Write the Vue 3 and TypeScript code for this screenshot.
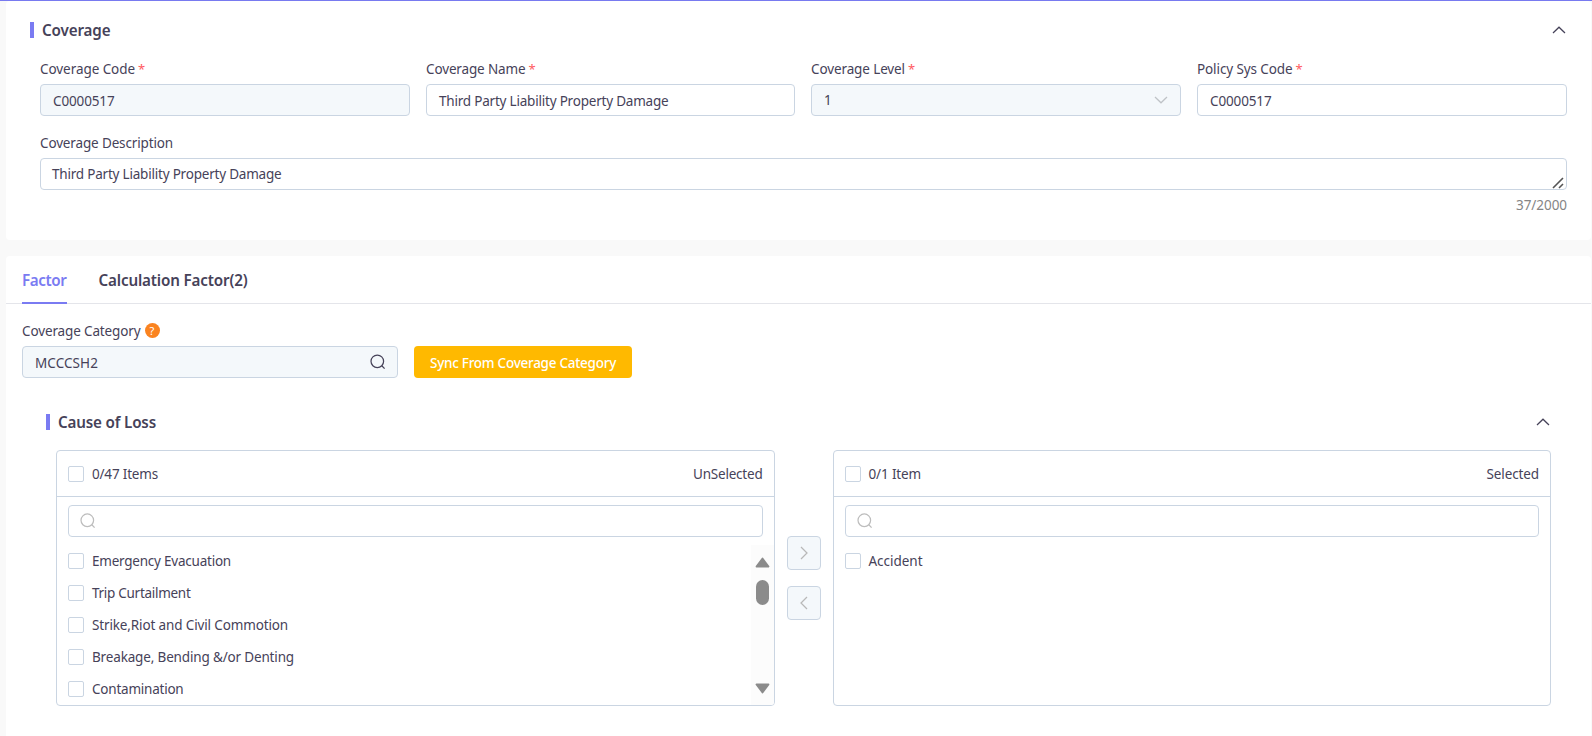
<script setup lang="ts">
interface Field {
  label: string
  labelWidth: number
  value: string
  valueWidth: number
  kind: 'text' | 'select'
  disabled: boolean
}

interface Item {
  name: string
  width: number
}

interface Panel {
  count: string
  countWidth: number
  title: string
  titleWidth: number
  items: Item[]
  scroll: boolean
}

const fields: Field[] = [
  { label: 'Coverage Code', labelWidth: 95, value: 'C0000517', valueWidth: 61.5, kind: 'text', disabled: true },
  { label: 'Coverage Name', labelWidth: 99.5, value: 'Third Party Liability Property Damage', valueWidth: 229.5, kind: 'text', disabled: false },
  { label: 'Coverage Level', labelWidth: 94, value: '1', valueWidth: 8, kind: 'select', disabled: true },
  { label: 'Policy Sys Code', labelWidth: 95.5, value: 'C0000517', valueWidth: 61.5, kind: 'text', disabled: false },
]

const source: Panel = {
  count: '0/47 Items',
  countWidth: 66,
  title: 'UnSelected',
  titleWidth: 69.5,
  items: [
    { name: 'Emergency Evacuation', width: 139 },
    { name: 'Trip Curtailment', width: 98.5 },
    { name: 'Strike,Riot and Civil Commotion', width: 196 },
    { name: 'Breakage, Bending &/or Denting', width: 202 },
    { name: 'Contamination', width: 91.5 },
  ],
  scroll: true,
}

const target: Panel = {
  count: '0/1 Item',
  countWidth: 52.5,
  title: 'Selected',
  titleWidth: 52.5,
  items: [{ name: 'Accident', width: 54 }],
  scroll: false,
}

const panels: Panel[] = [source, target]

// Tracks a label's letters so that it takes the given width in px.
const vFit = {
  mounted(el: HTMLElement, binding: { value: number }) {
    const natural = el.getBoundingClientRect().width
    const count = (el.textContent ?? '').length
    if (count > 1) el.style.letterSpacing = `${(binding.value - natural) / count}px`
  },
}
</script>

<template>
  <div class="page">
    <section class="card coverage">
      <header class="section-head">
        <i class="bar"></i>
        <h2 v-fit="68.5">Coverage</h2>
        <svg class="chev" viewBox="0 0 14 8"><path d="M1 7 7 1.2 13 7" /></svg>
      </header>

      <div class="fields">
        <div v-for="f in fields" :key="f.label" class="field">
          <div class="label"><span v-fit="f.labelWidth">{{ f.label }}</span><b class="req">*</b></div>
          <div class="input" :class="{ disabled: f.disabled, select: f.kind === 'select' }">
            <span v-fit="f.valueWidth" class="val">{{ f.value }}</span>
            <svg v-if="f.kind === 'select'" class="down" viewBox="0 0 14 8"><path d="M1 1 7 6.8 13 1" /></svg>
          </div>
        </div>
      </div>

      <div class="field desc">
        <div class="label"><span v-fit="133">Coverage Description</span></div>
        <div class="input area">
          <span v-fit="229.5" class="val">Third Party Liability Property Damage</span>
          <svg class="grip" viewBox="0 0 12 12"><path d="M1 11 11 1M7 11 11 7" /></svg>
        </div>
        <div class="counter"><span v-fit="51">37/2000</span></div>
      </div>
    </section>

    <section class="card factor">
      <nav class="tabs">
        <a class="tab active"><span v-fit="44.5">Factor</span></a>
        <a class="tab"><span v-fit="149">Calculation Factor(2)</span></a>
      </nav>

      <div class="category">
        <div class="label">
          <span v-fit="118.5">Coverage Category</span>
          <i class="help">?</i>
        </div>
        <div class="row">
          <div class="input disabled lookup">
            <span v-fit="63" class="val">MCCCSH2</span>
            <svg class="glass" viewBox="0 0 16 16"><circle cx="7.3" cy="7.3" r="6.3" /><path d="M11.8 11.8 14.6 14.6" /></svg>
          </div>
          <button class="sync"><span v-fit="186">Sync From Coverage Category</span></button>
        </div>
      </div>

      <div class="cause">
        <header class="section-head">
          <i class="bar"></i>
          <h2 v-fit="98">Cause of Loss</h2>
          <svg class="chev" viewBox="0 0 14 8"><path d="M1 7 7 1.2 13 7" /></svg>
        </header>

        <div class="transfer">
          <template v-for="(p, i) in panels" :key="p.title">
            <div v-if="i === 1" class="ops">
              <button class="op"><svg viewBox="0 0 8 14"><path d="M1 1 7 7 1 13" /></svg></button>
              <button class="op"><svg viewBox="0 0 8 14"><path d="M7 1 1 7 7 13" /></svg></button>
            </div>
            <div class="panel">
              <div class="panel-head">
                <i class="check"></i>
                <span v-fit="p.countWidth">{{ p.count }}</span>
                <span v-fit="p.titleWidth" class="title">{{ p.title }}</span>
              </div>
              <div class="input search">
                <svg class="glass" viewBox="0 0 16 16"><circle cx="7.3" cy="7.3" r="6.3" /><path d="M11.8 11.8 14.6 14.6" /></svg>
              </div>
              <div class="body">
                <ul>
                  <li v-for="it in p.items" :key="it.name">
                    <i class="check"></i><span v-fit="it.width">{{ it.name }}</span>
                  </li>
                </ul>
                <div v-if="p.scroll" class="scrollbar">
                  <svg class="arrow" viewBox="0 0 15 11"><path d="M7.5 1.5 13.5 9.5H1.5Z" /></svg>
                  <i class="thumb"></i>
                  <svg class="arrow end" viewBox="0 0 15 11"><path d="M7.5 9.5 1.5 1.5H13.5Z" /></svg>
                </div>
              </div>
            </div>
          </template>
        </div>
      </div>
    </section>
  </div>
</template>

<style>
body {
  background: #f9f9f9;
  overflow: hidden;
}
</style>

<style scoped>
* {
  box-sizing: border-box;
}
.page {
  height: 736px;
  overflow: hidden;
  padding: 0 1px 0 6px;
  border-top: 1px solid #787af0;
  background: #f9f9f9;
  color: #464259;
  font: 13.5px/20px "Segoe UI", "Noto Sans", "Open Sans", sans-serif;
}
span,
h2 {
  white-space: nowrap;
}
svg {
  display: block;
  fill: none;
  stroke: currentColor;
  stroke-width: 1.25;
  flex: none;
}
.card {
  background: #fff;
  border-radius: 4px;
}
.coverage {
  height: 239px;
  padding: 17px 24px 0;
}
.section-head {
  display: flex;
  align-items: center;
  height: 24px;
}
.bar {
  width: 4px;
  height: 16px;
  margin-right: 8px;
  background: #7a7bf2;
}
h2 {
  margin: 0;
  font-size: 15.2px;
  font-weight: 600;
  line-height: 22px;
}
.chev {
  width: 14px;
  height: 8px;
  margin-left: auto;
  margin-right: 1px;
}
.fields {
  display: grid;
  grid-template-columns: 370fr 369fr 370fr 370fr;
  gap: 16px;
  padding: 17px 0 0 10px;
}
.label {
  display: flex;
  align-items: center;
  height: 20px;
  margin-bottom: 5px;
}
.req {
  margin-left: 3px;
  color: #ff5a5f;
  font-size: 13px;
  font-weight: 400;
}
.input {
  display: flex;
  align-items: center;
  height: 32px;
  border: 1px solid #cad5e2;
  border-radius: 4px;
  background: #fff;
  padding: 1px 12px 0;
}
.input.disabled {
  background: #f4f8fb;
}
.input.select {
  padding-top: 0;
}
.down {
  width: 14px;
  height: 8px;
  margin-left: auto;
  color: #bfc3c7;
}
.desc {
  padding: 17px 0 0 10px;
}
.input.area {
  padding: 0 2px 0 11px;
}
.grip {
  width: 12px;
  height: 12px;
  margin: 17px 0 0 auto;
  color: #555;
  stroke-width: 1.6;
}
.counter {
  display: flex;
  justify-content: flex-end;
  padding-top: 5px;
  color: #858585;
}
.factor {
  height: 500px;
  margin-top: 16px;
}
.tabs {
  display: flex;
  gap: 32px;
  height: 48px;
  padding: 0 16px;
  border-bottom: 1px solid #e4e5ea;
}
.tab {
  height: 48px;
  padding-top: 13px;
  font-size: 15.2px;
  font-weight: 600;
  line-height: 22px;
}
.tab.active {
  color: #7a7bf2;
  border-bottom: 2px solid #7a7bf2;
}
.category {
  padding: 17px 16px 0;
}
.help {
  display: flex;
  align-items: center;
  justify-content: center;
  width: 15px;
  height: 15px;
  margin: -1px 0 0 4px;
  border-radius: 50%;
  background: #fa8320;
  color: #fff;
  font-size: 11px;
  font-style: normal;
  line-height: 15px;
}
.row {
  display: flex;
  gap: 16px;
}
.lookup {
  width: 376px;
}
.glass {
  width: 16px;
  height: 16px;
}
.lookup .glass {
  margin-left: auto;
  margin-top: -2px;
  margin-right: -1px;
}
.sync {
  display: flex;
  align-items: center;
  justify-content: center;
  width: 218px;
  height: 32px;
  border: 0;
  border-radius: 4px;
  padding: 1px 0 0;
  background: #ffb900;
  color: #fff;
  font: inherit;
  font-weight: 500;
}
.cause {
  padding: 32px 40px 0;
}
.transfer {
  display: flex;
  align-items: center;
  gap: 12px;
  padding: 16px 0 0 10px;
}
.panel {
  flex: 1 1 0;
  min-width: 0;
  height: 256px;
  border: 1px solid #cad5e2;
  border-radius: 4px;
  overflow: hidden;
}
.panel-head {
  display: flex;
  align-items: center;
  height: 46px;
  padding: 0 11px;
  border-bottom: 1px solid #cad5e2;
}
.panel-head .title {
  margin-left: auto;
}
.check {
  flex: none;
  width: 16px;
  height: 16px;
  margin-right: 8px;
  border: 1px solid #cad5e2;
  border-radius: 2px;
  background: #fff;
}
.search {
  margin: 8px 11px;
  padding: 0 11px;
  color: #bdbdbd;
}
.body {
  display: flex;
  height: 160px;
}
ul {
  flex: 1;
  margin: 0;
  padding: 0 0 0 11px;
  list-style: none;
}
li {
  display: flex;
  align-items: center;
  height: 32px;
}
.scrollbar {
  display: flex;
  flex-direction: column;
  align-items: center;
  width: 23px;
  padding: 12px 0 11px;
  background: #fcfcfc;
}
.arrow {
  width: 15px;
  height: 11px;
  color: #8b8b8b;
  fill: currentColor;
  stroke-width: 1.8;
  stroke-linejoin: round;
}
.thumb {
  width: 13px;
  height: 25px;
  margin-top: 12px;
  border-radius: 7px;
  background: #8b8b8b;
}
.arrow.end {
  margin-top: auto;
}
.ops {
  display: flex;
  flex-direction: column;
  gap: 16px;
}
.op {
  display: flex;
  align-items: center;
  justify-content: center;
  width: 34px;
  height: 34px;
  padding: 0;
  border: 1px solid #cad5e2;
  border-radius: 4px;
  background: #f4f8fb;
  color: #b8b8b8;
}
.op svg {
  width: 8px;
  height: 14px;
}
</style>
